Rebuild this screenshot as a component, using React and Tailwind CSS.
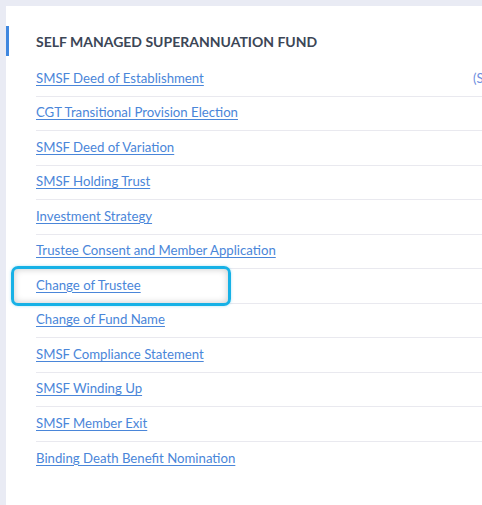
import React from "react";

const documents = [
  { title: "SMSF Deed of Establishment", note: "(SMSF Deed)" },
  { title: "CGT Transitional Provision Election" },
  { title: "SMSF Deed of Variation" },
  { title: "SMSF Holding Trust" },
  { title: "Investment Strategy" },
  { title: "Trustee Consent and Member Application" },
  { title: "Change of Trustee", highlighted: true },
  { title: "Change of Fund Name" },
  { title: "SMSF Compliance Statement" },
  { title: "SMSF Winding Up" },
  { title: "SMSF Member Exit" },
  { title: "Binding Death Benefit Nomination" },
];

const App = () => {
  return (
    <div
      className="min-h-[505px] w-[482px] overflow-hidden bg-[#e9ebf4] pl-[6px] pt-[6px]"
      style={{ fontFamily: '"Lato", "Noto Sans", sans-serif' }}
    >
      <div className="min-h-[499px] bg-white pt-[20px]">
        {/* Section heading */}
        <div className="flex items-center border-l-[3px] border-[#3f87df] h-[30px] pl-[27px]">
          <h3 className="text-[14px] font-bold text-[#3c4656]">
            SELF MANAGED SUPERANNUATION FUND
          </h3>
        </div>

        {/* Document list */}
        <ul className="mt-[6px] pl-[30px]">
          {documents.map((doc, index) => (
            <li
              key={index}
              className={
                "relative flex h-[34.5px] items-center whitespace-nowrap " +
                (index < documents.length - 1 ? "border-b border-[#e9e9ef]" : "")
              }
            >
              {doc.highlighted && (
                <span className="pointer-events-none absolute left-[-25px] top-[-3px] h-[40px] w-[220px] rounded-[7px] border-[3px] border-[#17b1e6] shadow-[inset_0_0_7px_rgba(0,0,0,0.22),0_0_3px_rgba(23,177,230,0.35)]" />
              )}
              <a
                href="#"
                className="text-[13.2px] text-[#4a86d9] underline underline-offset-2"
              >
                {doc.title}
              </a>
              {doc.note && (
                <span className="absolute left-[437px] text-[13.2px] text-[#6f8fe0]">
                  {doc.note}
                </span>
              )}
            </li>
          ))}
        </ul>
      </div>
    </div>
  );
};

export default App;
